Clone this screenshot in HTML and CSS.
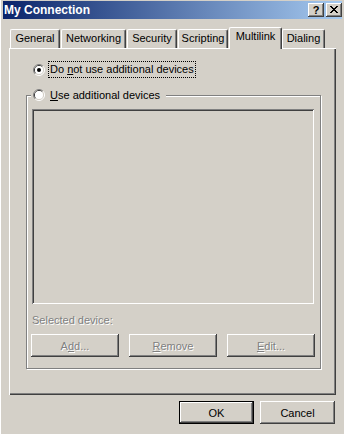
FILE: index.html
```html
<!doctype html>
<html>
<head>
	<meta charset="UTF-8">
	<title>My Connection</title>
	<link rel="stylesheet" href="styles.css">
</head>
<body>
	<div class="window">
		<div class="titlebar">
			<span class="title">My Connection</span>
			<div class="caption-btns">
				<button class="cap cap-help">?</button>
				<button class="cap">
					<svg width="8" height="7" viewBox="0 0 8 7" shape-rendering="crispEdges">
						<rect x="0" y="0" width="2" height="1"/><rect x="6" y="0" width="2" height="1"/>
						<rect x="1" y="1" width="2" height="1"/><rect x="5" y="1" width="2" height="1"/>
						<rect x="2" y="2" width="4" height="1"/>
						<rect x="3" y="3" width="2" height="1"/>
						<rect x="2" y="4" width="4" height="1"/>
						<rect x="1" y="5" width="2" height="1"/><rect x="5" y="5" width="2" height="1"/>
						<rect x="0" y="6" width="2" height="1"/><rect x="6" y="6" width="2" height="1"/>
					</svg>
				</button>
			</div>
		</div>
		<div class="content">
			<div class="tabs">
				<div class="tab tab-general">General</div>
				<div class="tab tab-networking">Networking</div>
				<div class="tab tab-security">Security</div>
				<div class="tab tab-scripting">Scripting</div>
				<div class="tab tab-multilink selected">Multilink</div>
				<div class="tab tab-dialing">Dialing</div>
			</div>
			<div class="panel">
				<div class="radio-row">
					<svg class="radio" width="12" height="12" viewBox="0 0 12 12">
						<path d="M2.11 9.89 A5.5 5.5 0 0 1 9.89 2.11" fill="none" stroke="#808080"/>
						<path d="M9.89 2.11 A5.5 5.5 0 0 1 2.11 9.89" fill="none" stroke="#ffffff"/>
						<path d="M2.82 9.18 A4.5 4.5 0 0 1 9.18 2.82" fill="none" stroke="#404040"/>
						<path d="M9.18 2.82 A4.5 4.5 0 0 1 2.82 9.18" fill="none" stroke="#d4d0c8"/>
						<circle cx="6" cy="6" r="4" fill="#ffffff"/>
						<circle cx="6" cy="6" r="2" fill="#000000"/>
					</svg>
					<span class="radio-label focus">Do <u>n</u>ot use additional devices</span>
				</div>
				<fieldset class="group">
					<legend class="group-legend">
						<svg class="radio" width="12" height="12" viewBox="0 0 12 12">
							<path d="M2.11 9.89 A5.5 5.5 0 0 1 9.89 2.11" fill="none" stroke="#808080"/>
							<path d="M9.89 2.11 A5.5 5.5 0 0 1 2.11 9.89" fill="none" stroke="#ffffff"/>
							<path d="M2.82 9.18 A4.5 4.5 0 0 1 9.18 2.82" fill="none" stroke="#404040"/>
							<path d="M9.18 2.82 A4.5 4.5 0 0 1 2.82 9.18" fill="none" stroke="#d4d0c8"/>
							<circle cx="6" cy="6" r="4" fill="#ffffff"/>
						</svg>
						<span class="radio-label"><u>U</u>se additional devices</span>
					</legend>
					<div class="listbox"></div>
					<div class="selected-label disabled">Selected device:</div>
					<div class="btn-row">
						<button class="btn btn-wide disabled">A<u>d</u>d...</button>
						<button class="btn btn-wide disabled"><u>R</u>emove</button>
						<button class="btn btn-wide disabled"><u>E</u>dit...</button>
					</div>
				</fieldset>
			</div>
			<div class="dialog-btns">
				<button class="btn btn-default">OK</button>
				<button class="btn">Cancel</button>
			</div>
		</div>
	</div>
</body>
</html>
```
FILE: styles.css
```css
*{
	margin:0px;
	box-sizing:border-box;
}
body{
	background:#d4d0c8;
	font-family:"Liberation Sans", Arial, sans-serif;
	font-size:11px;
	color:#000000;
}
.window{
	width:344px;
	height:434px;
	padding:1px 2px 0px 3px;
	background:#d4d0c8;
	box-shadow:inset 1px 0px #ffffff;
}
.titlebar{
	height:18px;
	display:flex;
	align-items:center;
	justify-content:space-between;
	padding:0px 0px 0px 1px;
	background:linear-gradient(to right, #0a246a, #a6caf0);
}
.title{
	color:#ffffff;
	font-weight:bold;
	font-size:12px;
}
.caption-btns{
	display:flex;
	gap:2px;
}
.cap{
	width:16px;
	height:14px;
	padding:0px;
	border:none;
	background:#d4d0c8;
	box-shadow:inset -1px -1px #404040, inset 1px 1px #ffffff, inset -2px -2px #808080;
	display:flex;
	align-items:center;
	justify-content:center;
	font-family:"Liberation Sans", Arial, sans-serif;
	font-weight:bold;
	font-size:11px;
	line-height:12px;
	color:#000000;
}
.cap-help{
	padding-bottom:1px;
}
.cap svg{
	fill:#000000;
	margin-top:-1px;
}
.content{
	padding:8px 7px 0px 6px;
}
.tabs{
	display:flex;
	align-items:flex-end;
	height:21px;
	padding-left:1px;
}
.tab{
	height:19px;
	margin-right:1px;
	border-left:1px solid #ffffff;
	border-top:1px solid #ffffff;
	border-right:1px solid #404040;
	border-radius:2px 2px 0px 0px;
	box-shadow:inset -1px 0px #808080;
	background:#d4d0c8;
	text-align:center;
	line-height:17px;
}
.tab-general{ width:50px; }
.tab-networking{ width:65px; }
.tab-security{ width:50px; }
.tab-scripting{ width:50px; }
.tab-multilink{ width:53px; }
.tab-dialing{ width:43px; }
.tab.selected{
	height:22px;
	margin-bottom:-1px;
	margin-right:0px;
	line-height:16px;
	position:relative;
	z-index:1;
}
.panel{
	width:327px;
	height:347px;
	padding-top:13px;
	background:#d4d0c8;
	box-shadow:inset 1px 1px #ffffff, inset -1px -1px #404040, inset -2px -2px #808080;
}
.radio-row{
	display:flex;
	align-items:center;
	gap:3px;
	margin-left:24px;
}
.radio{
	display:block;
	flex:none;
}
.radio-label{
	line-height:13px;
	padding:1px 1px;
	border:1px solid transparent;
}
.radio-label.focus{
	border:1px dotted #000000;
}
.group{
	width:295px;
	margin:9px 0px 0px 17px;
	padding:0px 0px 11px 0px;
	border:1px solid #808080;
	box-shadow:inset 1px 1px #ffffff, 1px 1px #ffffff;
	min-width:0px;
}
.group-legend{
	display:flex;
	align-items:center;
	gap:3px;
	margin-left:4px;
	padding:0px 4px 0px 2px;
	height:16px;
	background:#d4d0c8;
}
.group-legend .radio-label{
	padding:0px 1px;
}
.listbox{
	width:282px;
	height:195px;
	margin:6px 0px 0px 5px;
	background:#d4d0c8;
	box-shadow:inset 1px 1px #808080, inset -1px -1px #ffffff, inset 2px 2px #404040, inset -2px -2px #d4d0c8;
}
.selected-label{
	margin:10px 0px 0px 5px;
	line-height:13px;
}
.disabled{
	color:#808080;
	text-shadow:1px 1px #ffffff;
}
.btn-row{
	display:flex;
	gap:10px;
	margin:7px 0px 0px 4px;
}
.btn{
	width:75px;
	height:23px;
	padding:0px;
	border:none;
	background:#d4d0c8;
	box-shadow:inset -1px -1px #404040, inset 1px 1px #ffffff, inset -2px -2px #808080;
	font-family:"Liberation Sans", Arial, sans-serif;
	font-size:11px;
	color:#000000;
}
.btn.disabled{
	color:#808080;
}
.btn-wide{
	width:88px;
}
.btn-default{
	box-shadow:inset 0px 0px 0px 1px #000000, inset -2px -2px #404040, inset 2px 2px #ffffff, inset -3px -3px #808080;
}
.dialog-btns{
	display:flex;
	justify-content:flex-end;
	gap:6px;
	margin-top:6px;
}
```
